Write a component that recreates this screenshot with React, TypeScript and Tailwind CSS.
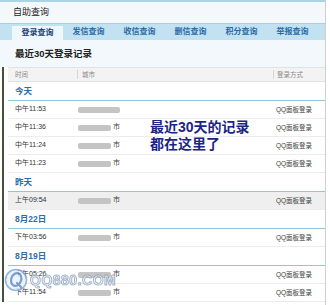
import React from 'react';

const tabs = ['登录查询', '发信查询', '收信查询', '删信查询', '积分查询', '举报查询'];

type Row = { time: string; long?: boolean; shaded?: boolean };

const groups: { label: string; rows: Row[] }[] = [
  {
    label: '今天',
    rows: [{ time: '中午11:53', long: true }, { time: '中午11:36' }, { time: '中午11:24' }, { time: '中午11:23' }],
  },
  { label: '昨天', rows: [{ time: '上午09:54', shaded: true }] },
  { label: '8月22日', rows: [{ time: '下午03:56' }] },
  { label: '8月19日', rows: [{ time: '下午05:26' }, { time: '下午11:54' }] },
];

const RecordRow: React.FC<{ row: Row }> = ({ row }) => (
  <div
    className={`h-[18px] flex items-center border-b border-[#ececec] text-[7px] text-[#333] ${
      row.shaded ? 'bg-[#efefef]' : ''
    }`}
  >
    <span className="w-[70px] pl-[7px]">{row.time}</span>
    <div className="flex-1 flex items-center">
      <span
        className={`h-[6px] rounded-[2px] bg-[#c4c4c4] blur-[0.6px] ${row.long ? 'w-[42px]' : 'w-[33px]'}`}
      />
      {!row.long && <span className="ml-[2px] text-[7px] text-[#444]">市</span>}
    </div>
    <span className="w-[52px] pl-[3px] text-[6.5px] text-[#444]">QQ面板登录</span>
  </div>
);

export default function App() {
  return (
    <div className="relative w-[330px] h-[305px] overflow-hidden bg-white font-['Liberation_Sans','Noto_Sans_CJK_SC',sans-serif]">
      <div className="mr-[4px] border-r border-[#cfcfcf] h-full">
        {/* title bar */}
        <div className="h-[23px] border-t-2 border-[#a9d4e4] bg-[#f5f8fa] flex items-center pl-[13px] text-[9px] text-[#222]">
          自助查询
        </div>

        {/* tabs */}
        <div className="h-[17px] bg-[#c3e2f1] border-t border-[#a6d0e4] flex pl-[12px]">
          {tabs.map((t, i) => (
            <div
              key={t}
              className={`w-[51px] flex items-center justify-center text-[8px] font-bold ${
                i === 0 ? 'bg-[#edf7fc] text-[#1c3f78] mt-[2px]' : 'text-[#2b6aa8]'
              }`}
            >
              {t}
            </div>
          ))}
        </div>

        {/* sub heading */}
        <div className="h-[27px] bg-[#f2f8fc] flex items-center pl-[15px] pt-[2px] text-[9.5px] font-bold text-[#222]">
          最近30天登录记录
        </div>

        {/* table */}
        <div className="ml-[2px] border-l-2 border-[#46523c] pl-[4px]">
          <div className="h-[15px] flex items-center bg-[#f3f3f3] border-t border-[#dddddd] border-b border-[#e2e2e2] text-[6.5px] text-[#8a8a8a]">
            <span className="w-[70px] pl-[7px] border-r border-[#d6d6d6] h-[9px] flex items-center">时间</span>
            <span className="flex-1 pl-[4px]">城市</span>
            <span className="w-[52px] pl-[3px] border-l border-[#d6d6d6] h-[9px] flex items-center">登录方式</span>
          </div>

          {groups.map((g) => (
            <div key={g.label}>
              <div className="h-[19px] flex items-center pl-[7px] border-b border-[#8fc6d8] text-[8.5px] font-bold text-[#2d6ea8]">
                {g.label}
              </div>
              {g.rows.map((r) => (
                <RecordRow key={r.time} row={r} />
              ))}
            </div>
          ))}
        </div>
      </div>

      {/* overlay caption */}
      <div className="absolute left-[150px] top-[119px] text-[14px] leading-[17px] font-bold text-[#1b2585]">
        <div>最近30天的记录</div>
        <div>都在这里了</div>
      </div>

      {/* watermark */}
      <div className="absolute left-[4px] top-[268px] flex items-center gap-[2px] opacity-80">
        <svg width="24" height="24" viewBox="0 0 24 24">
          <circle cx="12" cy="12" r="10.5" fill="#e9f1fb" stroke="#7ea3d6" strokeWidth="1.6" />
          <ellipse cx="12" cy="11.5" rx="5" ry="6.5" fill="none" stroke="#5d86c6" strokeWidth="2.2" transform="rotate(20 12 12)" />
          <path d="M13 15 L17 19" stroke="#5d86c6" strokeWidth="2.2" strokeLinecap="round" />
        </svg>
        <span className="text-[14px] font-bold tracking-[0.5px] text-[#f4f8fc] [-webkit-text-stroke:1px_#8da2bd]">
          QQ880.COM
        </span>
      </div>
    </div>
  );
}
